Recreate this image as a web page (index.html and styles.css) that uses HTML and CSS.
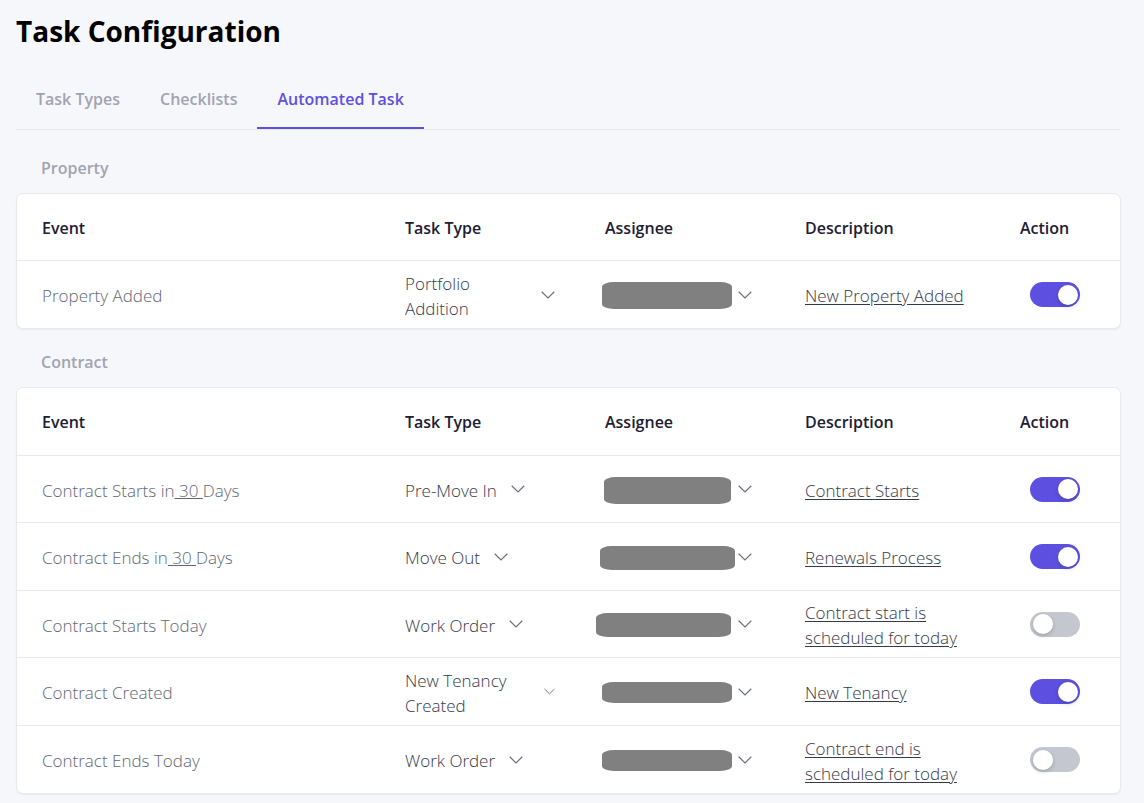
FILE: index.html
```html
<!DOCTYPE html>
<html lang="en">
<head>
<meta charset="utf-8">
<title>Task Configuration</title>
<meta name="viewport" content="width=device-width, initial-scale=1">
<link rel="stylesheet" href="styles.css">
</head>
<body>
<svg class="sprite" aria-hidden="true"><symbol id="chevron" viewBox="0 0 14 8"><path d="M.7.8 7 7 13.3.8" fill="none" stroke="currentColor" stroke-width="1.2"/></symbol></svg>
<main class="page">
  <h1 class="title">Task Configuration</h1>
  <nav class="tabs" aria-label="Configuration sections">
    <a class="tab" href="#types">Task Types</a>
    <a class="tab" href="#checklists">Checklists</a>
    <a class="tab tab-active" href="#automated" aria-current="page">Automated Task</a>
  </nav>

  <section class="group">
    <h2 class="group-title" id="property">Property</h2>
    <div class="card">
      <table class="tasks" aria-labelledby="property">
        <thead><tr><th class="col-event">Event</th><th class="col-type">Task Type</th><th class="col-assignee">Assignee</th><th class="col-description">Description</th><th class="col-action">Action</th></tr></thead>
        <tbody>
          <tr>
            <td class="event">Property Added</td>
            <td><button class="picker" type="button"><span class="picker-label">Portfolio Addition</span><svg class="chevron"><use href="#chevron"/></svg></button></td>
            <td><button class="assignee" type="button" aria-label="Assignee"><span class="slot"><span class="redacted tall"></span></span><svg class="chevron"><use href="#chevron"/></svg></button></td>
            <td class="details"><a class="description" href="#edit">New Property Added</a></td>
            <td class="action"><input class="toggle" type="checkbox" role="switch" aria-label="Property Added" checked></td>
          </tr>
        </tbody>
      </table>
    </div>
  </section>

  <section class="group">
    <h2 class="group-title" id="contract">Contract</h2>
    <div class="card">
      <table class="tasks" aria-labelledby="contract">
        <thead><tr><th class="col-event">Event</th><th class="col-type">Task Type</th><th class="col-assignee">Assignee</th><th class="col-description">Description</th><th class="col-action">Action</th></tr></thead>
        <tbody>
          <tr>
            <td class="event">Contract Starts in<button class="days" type="button"> 30 </button>Days</td>
            <td><button class="picker" type="button"><span class="picker-label">Pre-Move In</span><svg class="chevron"><use href="#chevron"/></svg></button></td>
            <td><button class="assignee" type="button" aria-label="Assignee"><span class="slot"><span class="redacted tall narrow"></span></span><svg class="chevron"><use href="#chevron"/></svg></button></td>
            <td class="details"><a class="description" href="#edit">Contract Starts</a></td>
            <td class="action"><input class="toggle" type="checkbox" role="switch" aria-label="Contract Starts in 30 Days" checked></td>
          </tr>
          <tr>
            <td class="event">Contract Ends in<button class="days" type="button"> 30 </button>Days</td>
            <td><button class="picker" type="button"><span class="picker-label">Move Out</span><svg class="chevron"><use href="#chevron"/></svg></button></td>
            <td><button class="assignee" type="button" aria-label="Assignee"><span class="slot"><span class="redacted medium wide"></span></span><svg class="chevron"><use href="#chevron"/></svg></button></td>
            <td class="details"><a class="description" href="#edit">Renewals Process</a></td>
            <td class="action"><input class="toggle" type="checkbox" role="switch" aria-label="Contract Ends in 30 Days" checked></td>
          </tr>
          <tr>
            <td class="event">Contract Starts Today</td>
            <td><button class="picker" type="button"><span class="picker-label">Work Order</span><svg class="chevron"><use href="#chevron"/></svg></button></td>
            <td><button class="assignee" type="button" aria-label="Assignee"><span class="slot slot-start"><span class="redacted medium wide"></span></span><svg class="chevron"><use href="#chevron"/></svg></button></td>
            <td class="details"><a class="description" href="#edit">Contract start is scheduled for today</a></td>
            <td class="action"><input class="toggle" type="checkbox" role="switch" aria-label="Contract Starts Today"></td>
          </tr>
          <tr>
            <td class="event">Contract Created</td>
            <td><button class="picker" type="button"><span class="picker-label">New Tenancy Created</span><svg class="chevron chevron-small"><use href="#chevron"/></svg></button></td>
            <td><button class="assignee" type="button" aria-label="Assignee"><span class="slot"><span class="redacted"></span></span><svg class="chevron"><use href="#chevron"/></svg></button></td>
            <td class="details"><a class="description" href="#edit">New Tenancy</a></td>
            <td class="action"><input class="toggle" type="checkbox" role="switch" aria-label="Contract Created" checked></td>
          </tr>
          <tr>
            <td class="event">Contract Ends Today</td>
            <td><button class="picker" type="button"><span class="picker-label">Work Order</span><svg class="chevron"><use href="#chevron"/></svg></button></td>
            <td><button class="assignee" type="button" aria-label="Assignee"><span class="slot"><span class="redacted"></span></span><svg class="chevron"><use href="#chevron"/></svg></button></td>
            <td class="details"><a class="description" href="#edit">Contract end is scheduled for today</a></td>
            <td class="action"><input class="toggle" type="checkbox" role="switch" aria-label="Contract Ends Today"></td>
          </tr>
        </tbody>
      </table>
    </div>
  </section>
</main>
</body>
</html>
```
FILE: styles.css
```css
* { box-sizing: border-box; }

body {
  margin: 0;
  background: #f6f7fb;
  color: #353a4a;
  font: 300 17px/25px "Open Sans", "Noto Sans", sans-serif;
}

button {
  padding: 0;
  border: 0;
  background: none;
  color: inherit;
  font: inherit;
  text-align: left;
  cursor: pointer;
}

.sprite { display: none; }
.page { padding: 11px 23px 9px 16px; }

.title {
  margin: 0;
  color: #000;
  font-size: 28px;
  font-weight: 700;
  line-height: 40px;
}

.tabs {
  display: flex;
  margin-top: 20px;
  border-bottom: 1px solid #e9eaf0;
}

.tab {
  padding: 16px 20px 15px;
  border-bottom: 2px solid transparent;
  color: #a2a3b1;
  font-size: 16px;
  font-weight: 600;
  text-decoration: none;
}

.tab-active {
  border-color: #5d50e0;
  color: #5d50e0;
}

.group-title {
  margin: 0;
  padding: 26px 25px 12px;
  color: #a2a3b1;
  font-size: 16px;
  font-weight: 600;
  line-height: 25px;
}

.group + .group .group-title { padding-top: 21px; }

.card {
  border: 1px solid #e9eaf0;
  border-radius: 7px;
  background: #fff;
  box-shadow: 0 1px 1px #e9eaf0;
}

.tasks {
  width: 100%;
  border-spacing: 0;
  table-layout: fixed;
}

.tasks th, .tasks td {
  height: 67px;
  padding: 0 25px;
  text-align: left;
}

.tasks th {
  padding-top: 2px;
  color: #1d2033;
  font-size: 16px;
  font-weight: 600;
}

.tasks tr:nth-child(even) td, .group + .group th { height: 68px; }
.tasks th, .tasks tr:not(:last-child) td { border-bottom: 1px solid #e9eaf0; }

.col-type, .col-assignee { width: 200px; }
.col-description { width: 215px; }
.col-action { width: 125px; }

.tasks .event, .tasks .details { padding-top: 2px; }
.tasks .event { color: #636774; }

.days {
  text-decoration: underline;
  white-space: pre;
}

.picker {
  display: flex;
  align-items: center;
  gap: 14px;
  max-width: 150px;
}

.picker-label { padding-top: 2px; }

.chevron {
  flex: none;
  width: 14px;
  height: 8px;
  color: #6c7080;
}

.chevron-small {
  width: 11px;
  height: 7px;
}

.assignee {
  display: flex;
  align-items: center;
  margin-left: -9px;
}

.slot {
  display: flex;
  justify-content: center;
  width: 142px;
  padding-top: 2px;
}

.slot-start { justify-content: flex-start; }

.redacted {
  width: 130px;
  height: 21px;
  border-radius: 12px / 5px;
  background: #808080;
}

.narrow { width: 127px; }
.wide { width: 135px; }
.medium { height: 24px; }
.tall { height: 27px; }

.description {
  color: inherit;
  text-underline-offset: 2px;
}

.tasks .action { padding: 0 35px; }

.toggle {
  display: flex;
  align-items: center;
  width: 50px;
  height: 25px;
  margin: 0;
  padding: 0 3px;
  border-radius: 13px;
  background: #c5c7d0;
  appearance: none;
  cursor: pointer;
}

.toggle::before {
  width: 20px;
  height: 20px;
  border-radius: 50%;
  background: #fff;
  box-shadow: 0 2px 4px #00230b33;
  content: "";
}

.toggle:checked {
  justify-content: flex-end;
  padding-right: 2px;
  background: #5d50e0;
}
```
